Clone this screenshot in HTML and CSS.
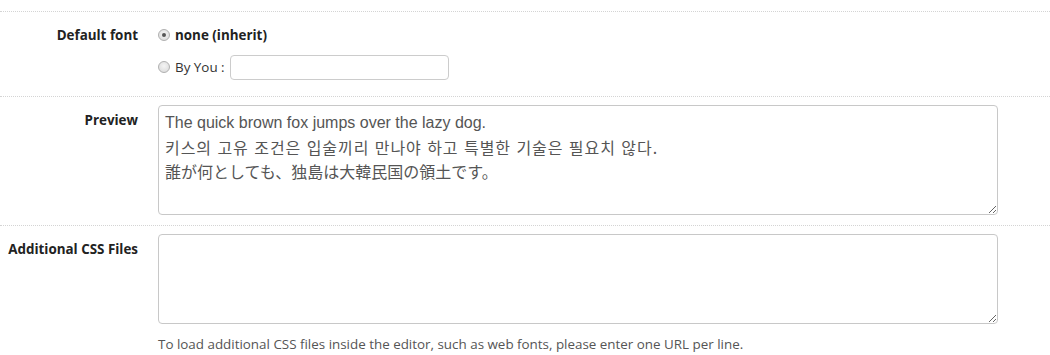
FILE: index.html
```html
<!DOCTYPE html>
<html>
<head>
<meta charset="utf-8">
<link rel="stylesheet" href="styles.css">
</head>
<body>
<div class="form">
  <div class="row row-font">
    <div class="label">Default font</div>
    <div class="field">
      <label class="option"><input type="radio" name="font" class="radio" checked><span class="opt-strong">none (inherit)</span></label>
      <label class="option"><input type="radio" name="font" class="radio"><span>By You :</span><input type="text" class="text-input"></label>
    </div>
  </div>
  <div class="row row-preview">
    <div class="label">Preview</div>
    <div class="field">
      <div class="area area-preview">
        <span class="line">The quick brown fox jumps over the lazy dog.</span>
        <span class="line line-ko" lang="ko">키스의 고유 조건은 입술끼리 만나야 하고 특별한 기술은 필요치 않다.</span>
        <span class="line line-ja" lang="ja">誰が何としても、独島は大韓民国の領土です。</span>
      </div>
    </div>
  </div>
  <div class="row row-css">
    <div class="label">Additional CSS Files</div>
    <div class="field">
      <textarea class="area area-css"></textarea>
      <p class="help">To load additional CSS files inside the editor, such as web fonts, please enter one URL per line.</p>
    </div>
  </div>
</div>
</body>
</html>
```

FILE: styles.css
```css
html, body {
  margin: 0;
  padding: 0;
  background: #fff;
}
body {
  width: 1050px;
  height: 355px;
  overflow: hidden;
  font-family: "Open Sans", "Noto Sans", sans-serif;
  font-size: 13.4px;
  color: #333;
}
.form {
  padding-top: 11px;
}
.row {
  display: grid;
  grid-template-columns: 138px 839px;
  column-gap: 20px;
  border-top: 1px dotted #d4d4d4;
}
.label {
  text-align: right;
  font-weight: 700;
  color: #222;
  line-height: 18px;
}
.row-font .label { padding-top: 14px; }
.row-font .field { padding-top: 10px; padding-bottom: 16px; }
.option {
  display: flex;
  align-items: center;
  height: 26px;
  gap: 5px;
}
.option + .option { margin-top: 6px; }
.opt-strong { font-weight: 700; color: #222; }
.radio {
  appearance: none;
  -webkit-appearance: none;
  margin: 0;
  width: 12px;
  height: 12px;
  border-radius: 50%;
  border: 1px solid #b0b0b0;
  background: radial-gradient(circle at 50% 40%, #f4f4f4, #d8d8d8);
  position: relative;
  flex: none;
}
.radio:checked::after {
  content: "";
  position: absolute;
  left: 3px;
  top: 3px;
  width: 4px;
  height: 4px;
  border-radius: 50%;
  background: #555;
}
.text-input {
  margin-left: 0;
  width: 219px;
  height: 25px;
  box-sizing: border-box;
  border: 1px solid #ccc;
  border-radius: 4px;
  background: #fff;
}
.row-preview .label { padding-top: 14px; }
.row-preview .field { padding-top: 8px; padding-bottom: 10px; }
.area {
  display: block;
  box-sizing: border-box;
  width: 840px;
  margin: 0;
  border: 1px solid #c8c8c8;
  border-radius: 4px;
  background: #fff;
  resize: vertical;
  outline: none;
}
.area-preview {
  height: 110px;
  overflow: auto;
  padding: 5px 6px;
  font-family: "Liberation Sans", Arial, "Noto Sans CJK KR", "Noto Sans CJK JP", sans-serif;
  font-size: 16px;
  line-height: 24px;
  color: #555;
}
.line { display: block; white-space: nowrap; }
.line-ko { font-family: "Noto Sans CJK KR", sans-serif; letter-spacing: 0.95px; }
.line-ja { font-family: "Noto Sans CJK JP", sans-serif; }
.row-css .label { padding-top: 14px; }
.row-css .field { padding-top: 8px; }
.area-css {
  height: 90px;
}
.help {
  margin: 11px 0 0;
  color: #555;
  line-height: 18px;
}
```
